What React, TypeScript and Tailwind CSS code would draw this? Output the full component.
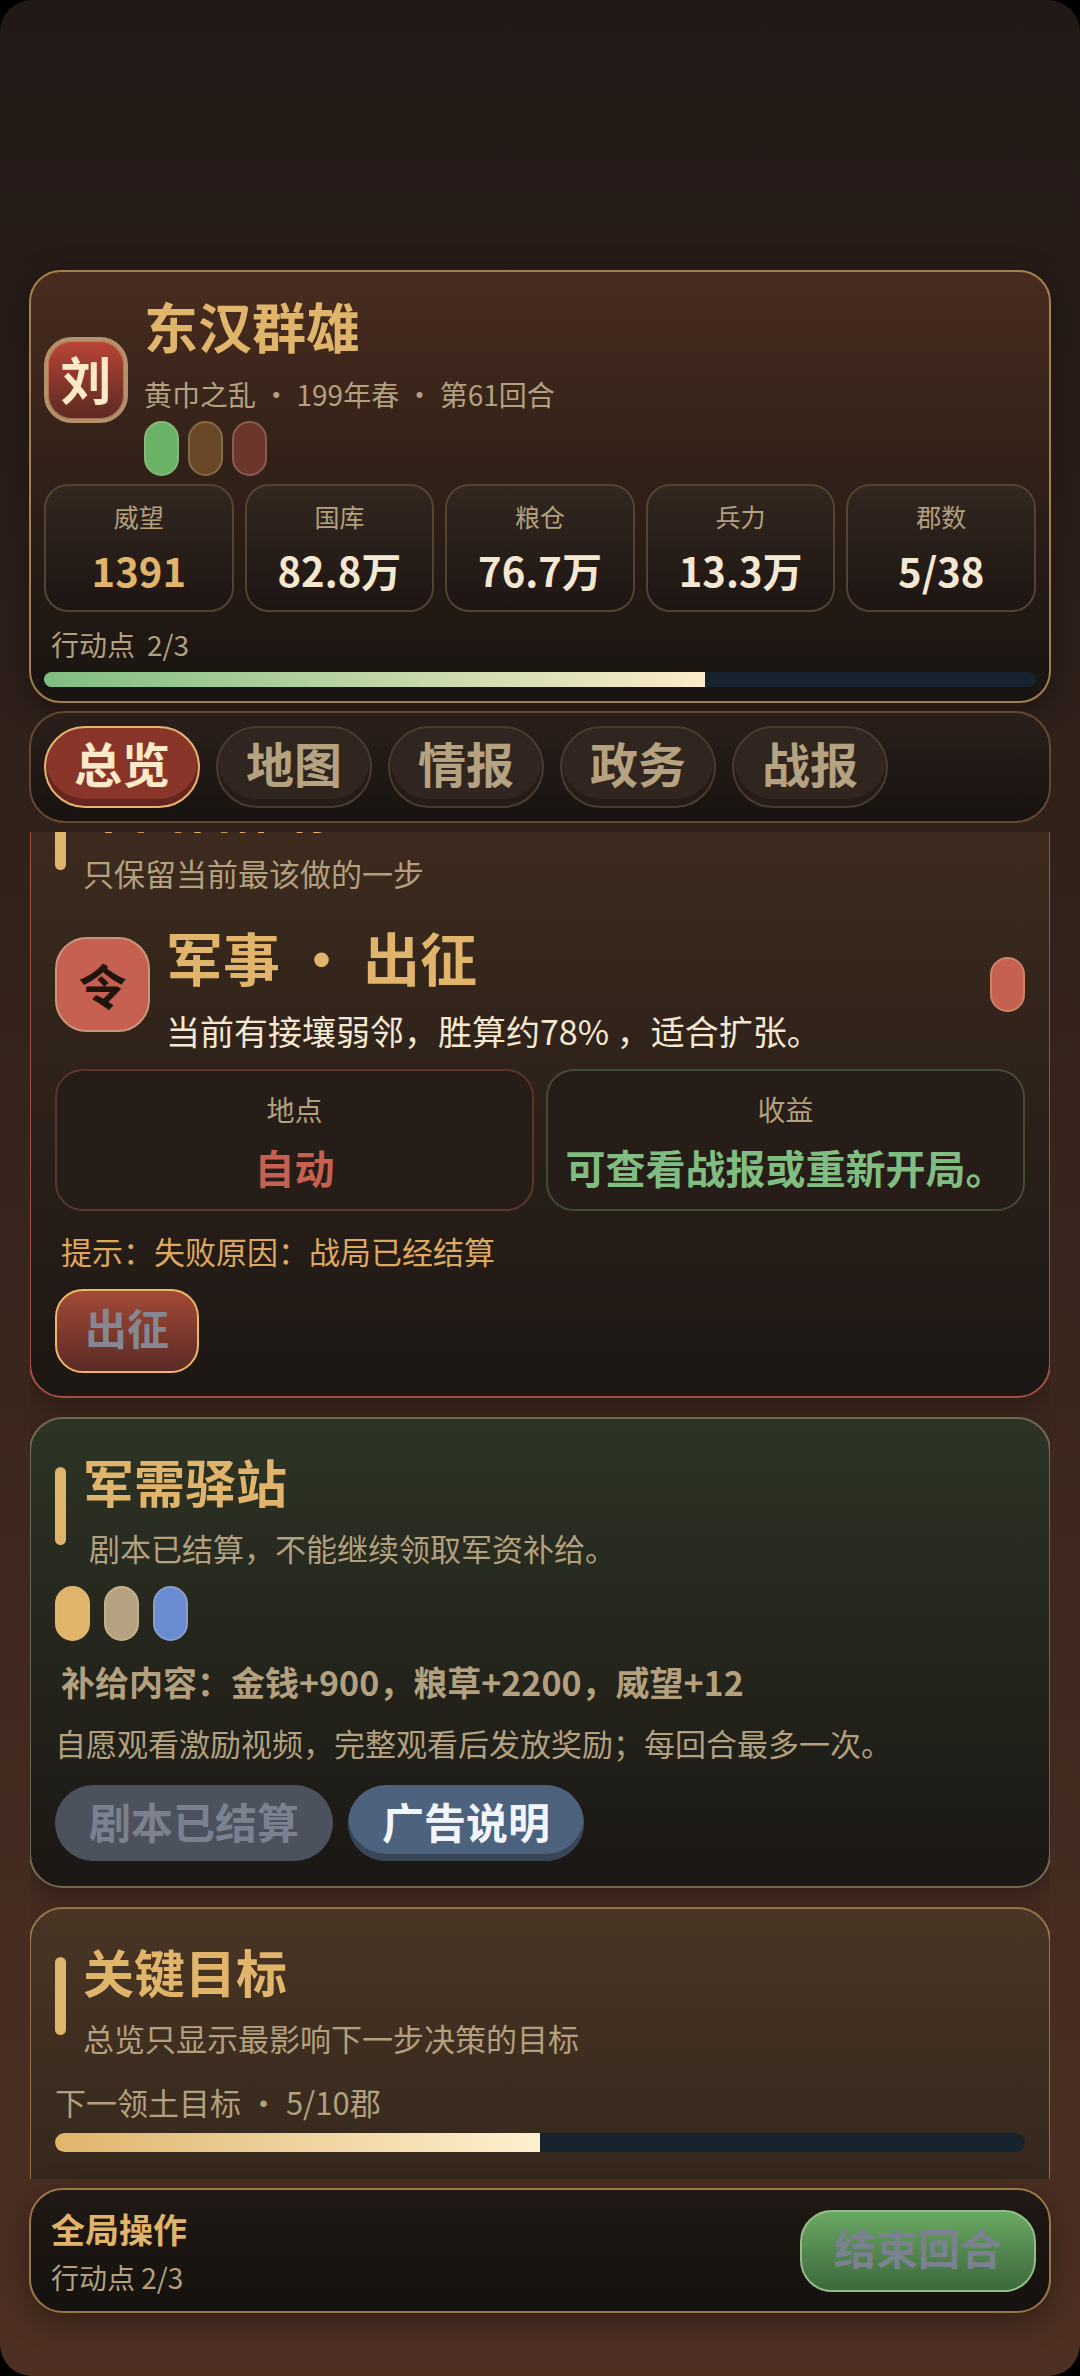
import { useLayoutEffect, useRef, useState } from "react";
import type { ReactNode } from "react";
import clsx from "clsx";

const stats = [
  { label: "威望", value: "1391", highlight: true },
  { label: "国库", value: "82.8万" },
  { label: "粮仓", value: "76.7万" },
  { label: "兵力", value: "13.3万" },
  { label: "郡数", value: "5/38" },
];

const tabs = ["总览", "地图", "情报", "政务", "战报"];

function Pill({ className }: { className: string }) {
  return <span className={clsx("block h-[55px] w-[35px] shrink-0 rounded-full border-2", className)} />;
}

function ProgressBar({ value, label, className, fill }: { value: number; label: string; className: string; fill: string }) {
  return (
    <div
      role="progressbar"
      aria-label={label}
      aria-valuenow={Math.round(value)}
      className={clsx("overflow-hidden rounded-full bg-[#17232e]", className)}
    >
      <div className={clsx("h-full bg-linear-to-r", fill)} style={{ width: `${value}%` }} />
    </div>
  );
}

function Card({ className, children }: { className: string; children: ReactNode }) {
  return (
    <section
      className={clsx(
        "-mx-px rounded-[34px] border-2 bg-linear-to-b px-6 pt-[29px] shadow-[0_8px_20px_rgba(0,0,0,0.25)]",
        className
      )}
    >
      {children}
    </section>
  );
}

function SectionTitle({ title, indent, children }: { title: string; indent?: boolean; children: ReactNode }) {
  return (
    <div className="flex items-center gap-[17px]">
      <span className="h-[78px] w-[11px] rounded-full bg-[#e0b46a]" />
      <div>
        <h2 className="text-[51px] leading-[66px] font-bold text-[#e0b46a]">{title}</h2>
        <p className={clsx("mt-[18px] text-[31px] leading-8 text-[#b3a07f]", indent && "pl-1.5")}>{children}</p>
      </div>
    </div>
  );
}

export default function App() {
  const [tab, setTab] = useState("总览");
  const listRef = useRef<HTMLElement>(null);

  useLayoutEffect(() => {
    if (listRef.current) listRef.current.scrollTop = 90;
  }, []);

  return (
    <div className="h-screen bg-black font-['Noto_Sans_CJK_SC',sans-serif]">
      <div className="flex h-full flex-col rounded-[32px] bg-linear-to-b from-[#221916] to-[#4e3023] px-[29px] pt-[270px] pb-[63px]">
        {/* status header */}
        <header className="rounded-[32px] border-2 border-[#a2804b] bg-linear-to-b from-[#492c1f] to-[#181411] px-[13px] pt-3 pb-3.5 shadow-[0_8px_30px_rgba(0,0,0,0.35)]">
          <div className="flex items-center gap-4">
            <div className="flex h-[86px] w-[84px] shrink-0 items-center justify-center rounded-[28px] border-4 border-[#b39169] bg-linear-to-b from-[#b94535] to-[#5c2922] pb-1 text-[51px] font-bold text-[#fbe9c8] shadow-[inset_0_0_0_1px_rgba(222,150,115,0.6)]">
              刘
            </div>
            <div>
              <h1 className="text-[54px] leading-[84px] font-bold text-[#e0b46a]">东汉群雄</h1>
              <p className="mt-1.5 text-[28px] leading-10 text-[#b3a07f]">黄巾之乱 • 199年春 • 第61回合</p>
              <div className="mt-[7px] flex gap-[9px]">
                <Pill className="border-[#84b977] bg-[#6ab265]" />
                <Pill className="border-[#866b47] bg-[#694827]" />
                <Pill className="border-[#8a5d4b] bg-[#6d362d]" />
              </div>
            </div>
          </div>

          <dl className="mt-2 grid grid-cols-5 gap-[11px]">
            {stats.map((s) => (
              <div
                key={s.label}
                className="rounded-3xl border-2 border-[#54432f] bg-linear-to-b from-[#33271f] to-[#1e1513] pt-3 pb-3.5 text-center"
              >
                <dt className="text-[25px] leading-9 text-[#b3a07f]">{s.label}</dt>
                <dd className={clsx("mt-2.5 text-[40px] leading-[52px] font-bold", s.highlight ? "text-[#e0b46a]" : "text-[#f5e8d2]")}>
                  {s.value}
                </dd>
              </div>
            ))}
          </dl>

          <p className="mt-3 flex gap-3 px-[7px] text-[28px] leading-10 text-[#b3a07f]">
            <span>行动点</span>
            <span>2/3</span>
          </p>
          <ProgressBar value={200 / 3} label="行动点" className="mt-2 h-[15px]" fill="from-[#7fbd81] to-[#fbecc9]" />
        </header>

        <nav className="mt-2 flex gap-4 rounded-[36px] border-2 border-[#65482f] bg-linear-to-b from-[#2b1f1b] to-[#181310] p-[13px]">
          {tabs.map((t) => (
            <button
              key={t}
              type="button"
              onClick={() => setTab(t)}
              className={clsx(
                "rounded-full border-2 px-7 pb-2.5 text-5xl leading-[68px] font-bold",
                t === tab
                  ? "border-[#e5b56e] bg-[#8a352a] text-[#fbe9c8] shadow-[inset_0_-7px_0_#66261f]"
                  : "border-[#493c2e] bg-[#31261f] text-[#b5a280] shadow-[inset_0_-7px_0_#271b17]"
              )}
            >
              {t}
            </button>
          ))}
        </nav>

        {/* scrolling cards */}
        <main ref={listRef} className="mx-px mt-[9px] mb-[9px] flex min-h-0 flex-1 flex-col gap-[19px] overflow-y-auto [scrollbar-width:none] *:shrink-0">
          <Card className="border-[#a34f43] from-[#432e20] to-[#1c1714] pb-[23px]">
            <SectionTitle title="本回合推荐">只保留当前最该做的一步</SectionTitle>

            <div className="mt-7 flex items-center gap-4">
              <div className="flex size-[95px] shrink-0 items-center justify-center rounded-[32px] border-2 border-[#c9967a] bg-[#c66050] text-5xl font-bold text-[#20140d]">
                令
              </div>
              <div className="flex-1">
                <h3 className="text-[57px] leading-[78px] font-bold text-[#e0b46a]">军事 • 出征</h3>
                <p className="mt-4 text-[34px] leading-10 text-[#f5e8d2]">当前有接壤弱邻，胜算约78% ，适合扩张。</p>
              </div>
              <Pill className="border-[#cc8468] bg-[#c66050]" />
            </div>

            <dl className="mt-[18px] grid grid-cols-2 gap-3 text-center">
              <div className="rounded-[28px] border-2 border-[#5c352c] bg-[#261d18] pt-[18px] pb-4">
                <dt className="text-[28px] leading-10 text-[#b3a07f]">地点</dt>
                <dd className="mt-3 text-[40px] leading-[52px] font-bold text-[#c66050]">自动</dd>
              </div>
              <div className="rounded-[28px] border-2 border-[#434c36] bg-[#261d18] pt-[18px] pb-4">
                <dt className="text-[28px] leading-10 text-[#b3a07f]">收益</dt>
                <dd className="mt-3 text-[40px] leading-[52px] font-bold text-[#80bd81]">可查看战报或重新开局。</dd>
              </div>
            </dl>

            <p className="mt-5 px-1.5 text-[31px] leading-10 text-[#dea85e]">提示：失败原因：战局已经结算</p>
            <button
              type="button"
              disabled
              className="mt-[18px] block rounded-[28px] border-2 border-[#ecb866] bg-linear-to-b from-[#a44a37] to-[#5b2b25] px-7 pb-2 text-[42px] leading-[72px] font-bold text-[#858893]"
            >
              出征
            </button>
          </Card>

          <Card className="border-[#736850] from-[#2d3425] to-[#1b1714] pb-[25px]">
            <SectionTitle title="军需驿站" indent>剧本已结算，不能继续领取军资补给。</SectionTitle>
            <div className="mt-[22px] flex gap-3.5">
              <Pill className="border-[#dfb773] bg-[#e0b46a]" />
              <Pill className="border-[#c3b08b] bg-[#b5a280]" />
              <Pill className="border-[#8b9dc4] bg-[#6a8cd3]" />
            </div>
            <p className="mt-[18px] px-1.5 text-[34px] leading-[46px] font-bold text-[#b3a07f]">补给内容：金钱+900，粮草+2200，威望+12</p>
            <p className="mt-[18px] text-[31px] leading-10 text-[#b3a07f]">自愿观看激励视频，完整观看后发放奖励；每回合最多一次。</p>
            <div className="mt-[22px] flex gap-[15px]">
              <button type="button" disabled className="rounded-full bg-[#4b525d] px-[34px] pb-1 text-[42px] leading-[72px] font-bold text-[#7b818e]">
                剧本已结算
              </button>
              <button
                type="button"
                className="rounded-full bg-[#4d637d] px-[34px] pb-1 text-[42px] leading-[72px] font-bold text-[#f3f5fd] shadow-[inset_0_-7px_0_#384657]"
              >
                广告说明
              </button>
            </div>
          </Card>

          <Card className="border-[#96744a] from-[#493524] to-[#1c1714] pb-[400px]">
            <SectionTitle title="关键目标">总览只显示最影响下一步决策的目标</SectionTitle>
            <p className="mt-7 text-[31px] leading-10 text-[#b3a07f]">下一领土目标 • 5/10郡</p>
            <ProgressBar value={50} label="下一领土目标" className="mt-[11px] h-[19px]" fill="from-[#e0b46a] to-[#fdf0cf]" />
          </Card>
        </main>

        {/* global actions */}
        <footer className="flex items-center justify-between rounded-[34px] border-2 border-[#9b7747] bg-linear-to-b from-[#201915] to-[#14110e] py-[19px] pr-[13px] pl-5 shadow-[0_8px_30px_rgba(0,0,0,0.35)]">
          <div>
            <h2 className="text-[34px] leading-10 font-bold text-[#e0b46a]">全局操作</h2>
            <p className="mt-[13px] text-[28px] leading-[30px] text-[#b3a07f]">行动点 2/3</p>
          </div>
          <button
            type="button"
            disabled
            className="rounded-[32px] border-2 border-[#93bd86] bg-linear-to-b from-[#6aa962] to-[#3c693d] px-8 pb-2 text-[42px] leading-[70px] font-bold text-[#7b818e]"
          >
            结束回合
          </button>
        </footer>
      </div>
    </div>
  );
}
